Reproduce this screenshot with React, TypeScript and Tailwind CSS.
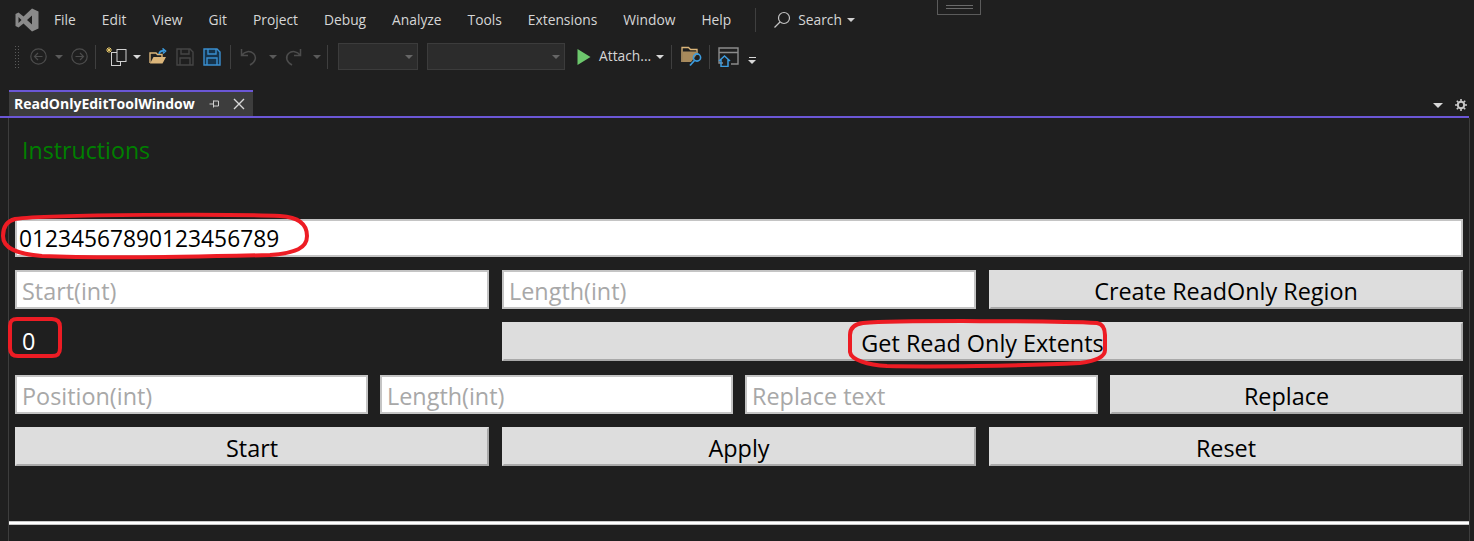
const menus = ['File', 'Edit', 'View', 'Git', 'Project', 'Debug', 'Analyze', 'Tools', 'Extensions', 'Window', 'Help'];

function Caret({ className = 'border-t-[#c8c8c8]' }: { className?: string }) {
  return <span className={`block h-0 w-0 border-x-[4px] border-t-[4px] border-x-transparent ${className}`} />;
}

function Sep({ className = '' }: { className?: string }) {
  return <span className={`block h-[24px] w-px bg-[#3f3f3f] ${className}`} />;
}

function Logo() {
  return (
    <svg width="24" height="24" viewBox="0 0 24 24" className="shrink-0">
      <path
        fill="#8a8a8a"
        d="M17 0.5 23.5 3.5V20.5L17 23.5 8.5 15.5 3.5 19.5 0.5 18V6L3.5 4.5 8.5 8.5ZM17 7.5 12 12 17 16.5ZM3.5 9V15L6.5 12Z"
      />
    </svg>
  );
}

function CircleArrow({ dir }: { dir: 'left' | 'right' }) {
  return (
    <svg width="17" height="17" viewBox="0 0 17 17" fill="none" stroke="#4c4c4c" strokeWidth="1.2">
      <circle cx="8.5" cy="8.5" r="7.7" />
      {dir === 'left' ? <path d="M12.5 8.5H4.8M8 5 4.5 8.5 8 12" /> : <path d="M4.5 8.5H12.2M9 5 12.5 8.5 9 12" />}
    </svg>
  );
}

function Save({ color, fill }: { color: string; fill: string }) {
  return (
    <svg width="18" height="18" viewBox="0 0 18 18" fill={fill} stroke={color} strokeWidth="1.4">
      <path d="M1 1H14L17 4V17H1Z" />
      <path d="M5 1V6H13V1M4 17V10H14V17" fill="none" />
    </svg>
  );
}

function Grip() {
  return (
    <span className="grid h-[22px] w-[6px] grid-cols-2 content-between">
      {Array.from({ length: 16 }).map((_, i) => (
        <span key={i} className="h-px w-px justify-self-center bg-[#5a5a5a]" />
      ))}
    </span>
  );
}

function Field({ label }: { label: string }) {
  return (
    <div className="flex h-[39px] items-center border-2 border-[#c4c4c4] bg-white pl-[5px] pt-[5px] text-[23.4px] text-[#a8a8a8]">
      {label}
    </div>
  );
}

function Btn({ label, className = '' }: { label: string; className?: string }) {
  return (
    <div className={`flex h-[39px] items-center justify-center border-2 border-[#a9a9a9] border-t-[#dddddd] border-l-[#dddddd] bg-[#dddddd] pt-[5px] text-[23.4px] text-black ${className}`}>
      {label}
    </div>
  );
}

export default function App() {
  return (
    <div className="relative h-[541px] w-[1474px] overflow-hidden bg-[#1f1f1f] font-['Open_Sans','Liberation_Sans',sans-serif] text-[#d6d6d6]">
      {/* window restore handle */}
      <div className="absolute left-[937px] top-[-2px] flex h-[17px] w-[44px] flex-col items-center justify-center gap-[2px] border border-[#5b5b5b]">
        <span className="h-px w-[27px] bg-[#6a6a6a]" />
        <span className="h-px w-[27px] bg-[#6a6a6a]" />
      </div>

      {/* menu bar */}
      <div className="flex h-[40px] items-center pl-[15px] text-[13.8px]">
        <Logo />
        <div className="ml-[15px] flex gap-[26px]">
          {menus.map((m) => (
            <span key={m}>{m}</span>
          ))}
        </div>
        <Sep className="ml-[24px]" />
        <svg width="18" height="18" viewBox="0 0 18 18" fill="none" stroke="#c4c4c4" strokeWidth="1.2" className="ml-[17px]">
          <circle cx="11" cy="7" r="5.5" />
          <path d="M7 11 1.5 16.5" />
        </svg>
        <span className="ml-[7px]">Search</span>
        <Caret className="ml-[5px] border-t-[#d0d0d0]" />
      </div>

      {/* toolbar */}
      <div className="flex h-[33px] items-center pl-[14px]">
        <Grip />
        <span className="ml-[10px]"><CircleArrow dir="left" /></span>
        <Caret className="ml-[8px] border-t-[#5a5a5a]" />
        <span className="ml-[8px]"><CircleArrow dir="right" /></span>
        <Sep className="ml-[7px]" />
        <svg width="21" height="21" viewBox="0 0 21 21" fill="none" className="ml-[10px]">
          <path d="M3 1V7M0 4H6M1 2 5 6M5 2 1 6" stroke="#e8c96a" strokeWidth="1" />
          <rect x="5.5" y="6.5" width="9" height="13" stroke="#d0d0d0" />
          <rect x="11" y="3.5" width="9" height="12" stroke="#d0d0d0" fill="#1f1f1f" />
        </svg>
        <Caret className="ml-[6px] border-t-[#d8d8d8]" />
        <svg width="19" height="17" viewBox="0 0 19 17" fill="none" className="ml-[8px]">
          <path d="M1 15V5H7L8.5 6.5H13V9" stroke="#dcb67a" strokeWidth="1.4" />
          <path d="M1 15.5H13.5L17 9H4.5Z" fill="#dcb67a" />
          <path d="M10 6C10.5 3.5 12.5 2.5 15 3M13.5.5 16.5 3 14 5.5" stroke="#3c9ce0" strokeWidth="1.6" />
        </svg>
        <span className="ml-[8px]"><Save color="#454545" fill="none" /></span>
        <span className="ml-[9px]"><Save color="#3a8fd0" fill="#16344c" /></span>
        <Sep className="ml-[9px]" />
        <svg width="18" height="18" viewBox="0 0 18 18" fill="none" stroke="#4c4c4c" strokeWidth="1.5" className="ml-[9px]">
          <path d="M1.5 1V7.5H8M1.5 7.5C5 3 10 2.5 13.5 5.5 17 9 15.5 14 10 17" />
        </svg>
        <Caret className="ml-[11px] border-t-[#5a5a5a]" />
        <svg width="18" height="18" viewBox="0 0 18 18" fill="none" stroke="#4c4c4c" strokeWidth="1.5" className="ml-[7px]">
          <path d="M16.5 1V7.5H10M16.5 7.5C13 3 8 2.5 4.5 5.5 1 9 2.5 14 8 17" />
        </svg>
        <Caret className="ml-[11px] border-t-[#5a5a5a]" />
        <Sep className="ml-[6px]" />
        <div className="ml-[10px] flex h-[27px] w-[80px] items-center justify-end border border-[#3c3c3c] bg-[#2c2c2c] pr-[4px]">
          <Caret className="border-t-[#666666]" />
        </div>
        <div className="ml-[9px] flex h-[27px] w-[138px] items-center justify-end border border-[#3c3c3c] bg-[#2c2c2c] pr-[4px]">
          <Caret className="border-t-[#666666]" />
        </div>
        <svg width="14" height="16" viewBox="0 0 14 16" className="ml-[12px]">
          <path d="M0.5 0V16L13.5 8Z" fill="#6cc76c" />
        </svg>
        <span className="ml-[8px] text-[13.8px]">Attach...</span>
        <Caret className="ml-[5px] border-t-[#d8d8d8]" />
        <Sep className="ml-[7px]" />
        <svg width="22" height="21" viewBox="0 0 22 21" fill="none" className="ml-[9px]">
          <path d="M1 16V1.5H7.5L9.5 3.5H16V9" stroke="#dcb67a" strokeWidth="1.3" />
          <path d="M1.5 5.5H15.5V9L10 16H1.5Z" fill="#a88a5c" />
          <circle cx="16" cy="11.5" r="3.6" stroke="#3c9ce0" strokeWidth="1.6" />
          <path d="M13.5 14.5 9 19.5" stroke="#3c9ce0" strokeWidth="1.8" />
        </svg>
        <Sep className="ml-[6px]" />
        <svg width="21" height="20" viewBox="0 0 21 20" fill="none" className="ml-[8px]">
          <path d="M5 16H1V1H20V17H13M1 5.5H20" stroke="#8c8c8c" strokeWidth="1.4" />
          <path d="M1 14 6.5 9 12 14M3 12.5V19.5H10V12.5" stroke="#3c9ce0" strokeWidth="1.5" />
        </svg>
        <span className="ml-[9px] mt-[8px] flex flex-col items-center gap-[2px]">
          <span className="h-px w-[7px] bg-[#d8d8d8]" />
          <Caret className="border-t-[#d8d8d8]" />
        </span>
      </div>

      {/* tab strip */}
      <div className="mr-[5px] mt-[17px] flex h-[28px] items-end justify-between border-b-2 border-[#6b57d6] pl-[9px] pr-[2px]">
        <div className="flex h-[26px] w-[244px] items-center border-t-2 border-[#6b57d6] bg-[#3d3d3d] pb-[1px] pl-[5px] text-[14px] font-bold text-white">
          ReadOnlyEditToolWindow
          <svg width="12" height="10" viewBox="0 0 12 10" fill="none" stroke="#d0d0d0" strokeWidth="1" className="ml-[14px] shrink-0">
            <path d="M0.5 5H4M4.5 1.5V8.5M4.5 2H9.5V7H4.5" />
          </svg>
          <svg width="12" height="12" viewBox="0 0 12 12" fill="none" stroke="#d8d8d8" strokeWidth="1.4" className="ml-[12px] shrink-0">
            <path d="M1 1 11 11M11 1 1 11" />
          </svg>
        </div>
        <div className="mb-[5px] flex items-center gap-[12px]">
          <Caret className="border-x-[5px] border-t-[5px] border-t-[#d8d8d8]" />
          <svg width="12" height="12" viewBox="0 0 12 12" fill="none" stroke="#c8c8c8">
            <circle cx="6" cy="6" r="3.2" strokeWidth="2" />
            <path d="M6 0V2.5M6 9.5V12M0 6H2.5M9.5 6H12M1.8 1.8 3.5 3.5M8.5 8.5 10.2 10.2M10.2 1.8 8.5 3.5M3.5 8.5 1.8 10.2" strokeWidth="1.6" />
          </svg>
        </div>
      </div>

      {/* tool window body */}
      <div className="ml-[8px] mr-[4px] flex h-[423px] flex-col border-x border-[#3d3d3d] pt-[17px]">
        <div className="ml-[13px] h-[35px] text-[23.2px] leading-[30px] text-[#008000]">Instructions</div>
        <div className="ml-[6px] mr-[6px] mt-[49px] flex flex-col gap-[13px]">
          <div className="flex h-[38px] items-center border-2 border-[#c4c4c4] bg-white pl-[2px] pt-[3px] text-[22.75px] text-black">
            01234567890123456789
          </div>
          <div className="grid grid-cols-3 gap-x-[13px]">
            <Field label="Start(int)" />
            <Field label="Length(int)" />
            <Btn label="Create ReadOnly Region" />
          </div>
          <div className="grid grid-cols-3 gap-x-[13px]">
            <div className="flex h-[39px] items-center pl-[7px] text-[23.4px] text-white">0</div>
            <Btn label="Get Read Only Extents" className="col-span-2" />
          </div>
          <div className="mt-[1px] grid grid-cols-4 gap-x-[12px]">
            <Field label="Position(int)" />
            <Field label="Length(int)" />
            <Field label="Replace text" />
            <Btn label="Replace" />
          </div>
          <div className="grid grid-cols-3 gap-x-[13px]">
            <Btn label="Start" />
            <Btn label="Apply" />
            <Btn label="Reset" />
          </div>
        </div>
        <div className="mt-[55px] h-[4px] border-y border-[#c8c8c8] bg-white" />
      </div>

      {/* red hand-drawn callouts */}
      <svg width="1474" height="541" viewBox="0 0 1474 541" fill="none" stroke="#ed1c24" strokeWidth="4" className="pointer-events-none absolute left-0 top-0">
        <path d="M15 219C50 214 240 214 280 216 298 217 307 224 307 236 307 248 296 253 270 255 190 257 90 258 42 256 16 254 3 248 3 236 3 226 7 221 15 219Z" />
        <path d="M17 319H52C58 319 60 322 60 327V348C60 354 58 356 52 356H18C12 356 10 353 10 348V326C10 321 12 319 17 319Z" />
        <path d="M863 323C900 320 1060 321 1097 323 1103 324 1105 328 1105 335V350C1105 357 1096 361 1080 363 1020 366 930 367 887 366 868 365 851 360 850 352V335C850 328 855 324 863 323Z" />
      </svg>
    </div>
  );
}
